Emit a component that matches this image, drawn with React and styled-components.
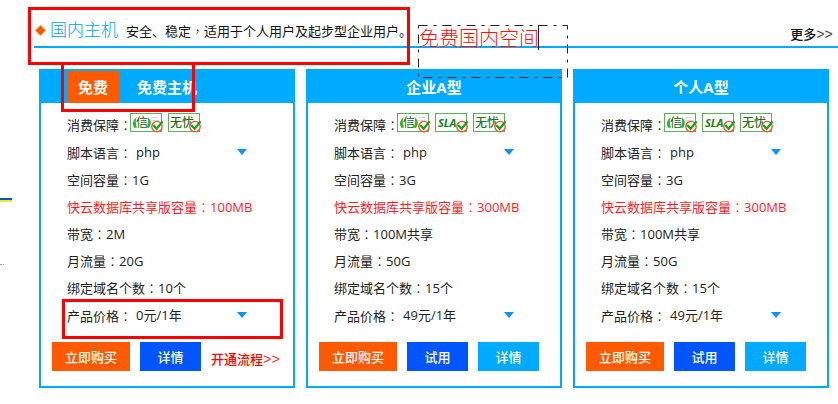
import React, { useState } from 'react';
import styled, { createGlobalStyle } from 'styled-components';

const GlobalStyle = createGlobalStyle`
    * {
        box-sizing: border-box;
    }
    body {
        margin: 0;
        background: #fff;
        color: #222;
        font-family: 'Open Sans', 'Noto Sans CJK SC', sans-serif;
        font-size: 13px;
    }
    button, select, input {
        font-family: inherit;
        font-size: inherit;
    }
`;

const Page = styled.div`
    position: relative;
    display: flex;
    align-items: flex-start;
`;

const Rail = styled.aside`
    flex: 0 0 34px;
    padding-top: 198px;
`;

const RailLine = styled.div`
    width: 12px;
    height: 4px;
    border-top: 2px solid #0055c8;
    border-bottom: 2px solid #f0ea20;
`;

const RailDots = styled.div`
    width: 4px;
    margin-top: 62px;
    border-top: 1px dotted #6aa8e8;
`;

const Section = styled.section`
    flex: 1;
    min-width: 0;
`;

const SectionHeader = styled.header`
    display: flex;
    align-items: center;
    height: 48px;
    padding: 14px 5px 0 1px;
    border-bottom: 2px solid #00aaff;
`;

const Title = styled.h2`
    margin: 0 8px 0 4px;
    font-size: 17px;
    font-weight: 300;
    line-height: 32px;
    color: #00a0f8;
`;

const Summary = styled.p`
    margin: 0;
    color: #111;
    white-space: nowrap;
`;

const MoreLink = styled.a`
    display: flex;
    align-items: center;
    margin-left: auto;
    padding-top: 6px;
    color: #111;
    font-weight: 500;
    text-decoration: none;
    white-space: nowrap;
`;

const Cards = styled.div`
    display: grid;
    grid-template-columns: repeat(3, 1fr);
    gap: 11px;
    padding: 21px 9px 0 5px;
`;

const Card = styled.article`
    border: 2px solid #00aaff;
    padding-bottom: 15px;
`;

const CardHeader = styled.div`
    display: flex;
    justify-content: ${props => props.$tagged ? 'flex-start' : 'center'};
    height: 32px;
    padding-left: ${props => props.$tagged ? '26px' : '0'};
    background: #00aaff;
    color: #fff;
`;

const Tag = styled.span`
    margin-right: 18px;
    padding: 0 11px;
    background: #ff5a00;
    font-size: 15px;
    font-weight: 700;
    line-height: 32px;
`;

const CardName = styled.h3`
    margin: 0;
    font-size: 15px;
    font-weight: 700;
    line-height: 32px;
`;

const Specs = styled.div`
    padding: 7px 0 0 26px;
`;

const Spec = styled.div`
    display: flex;
    align-items: center;
    height: ${props => props.$tall ? '28px' : '27px'};
    color: ${props => props.$accent ? '#ff1e28' : '#222'};
    white-space: nowrap;
`;

/* the TC face centres full-width punctuation */
const Mark = styled.span`
    font-family: 'Noto Sans CJK TC', sans-serif;
    font-weight: 300;
`;

const Badges = styled.span`
    display: flex;
    gap: 5px;
    margin: -2px 0 0 -2px;
`;

const SelectBox = styled.span`
    position: relative;
    display: flex;
    width: 115px;
    svg {
        position: absolute;
        right: 0;
        top: 8px;
        pointer-events: none;
    }
`;

const Select = styled.select`
    appearance: none;
    width: 100%;
    height: 22px;
    padding: 0 0 0 4px;
    border: 0;
    background: transparent;
    color: inherit;
`;

const Actions = styled.div`
    display: flex;
    align-items: center;
    gap: 10px;
    padding: 13px 0 0 11px;
`;

const colors = { buy: '#ff5a00', strong: '#0055ff', light: '#00aaff' };

const Button = styled.button`
    width: ${props => props.$kind === 'buy' ? '78px' : '61px'};
    height: 29px;
    padding: 0;
    border: 0;
    background: ${props => colors[props.$kind]};
    color: #fff;
    font-weight: 500;
    cursor: pointer;
`;

const FlowLink = styled.a`
    display: flex;
    align-items: center;
    padding-top: 4px;
    color: #f00;
    font-weight: 500;
    text-decoration: none;
    white-space: nowrap;
`;

const Arrows = styled.span`
    padding-top: 3px;
    font-family: 'Liberation Mono', monospace;
    font-size: 14px;
    font-weight: 400;
    line-height: 14px;
    opacity: 0.8;
`;

const Frame = styled.div`
    position: absolute;
    left: ${props => props.$left}px;
    top: ${props => props.$top}px;
    width: ${props => props.$width}px;
    height: ${props => props.$height}px;
    border: 3px solid #f00;
    pointer-events: none;
`;

const Note = styled.div`
    position: absolute;
    left: 418px;
    top: 25px;
    display: flex;
    width: 150px;
    height: 53px;
    svg {
        position: absolute;
        inset: 0;
    }
`;

const NoteInput = styled.input`
    width: 121px;
    height: 25px;
    padding: 0 0 0 1px;
    border: 0;
    border-right: 1px solid #222;
    background: transparent;
    color: #ff1010;
    font-family: 'Noto Sans CJK SC', sans-serif;
    font-size: 20px;
    font-weight: 300;
    outline: 0;
`;

const Diamond = () => (
    <svg width="11" height="11" viewBox="0 0 11 11" aria-hidden="true">
        <path d="M5.5 0.4 10.6 5.5 5.5 10.6 0.4 5.5Z" fill="#ff5500" stroke="#e8a020" strokeWidth="0.8" />
    </svg>
);

const Chevron = () => (
    <svg width="10" height="6" viewBox="0 0 10 6" aria-hidden="true">
        <path d="M0 0H10L5 6Z" fill="#0894ff" />
    </svg>
);

const Badge = ({ kind }) => (
    <svg width="33" height="20" viewBox="0 0 33 20" role="img" aria-label={kind}>
        <rect x="0.5" y="0.5" width="31" height="18" fill="#fff" stroke="#5fae5f" />
        {kind === '信云' && (
            <g>
                <path d="M6.6 4Q0.5 9.5 4.5 15L7 14.4Q4.8 9 6.6 4Z" fill="#2bb52b" />
                <path d="M17.6 4Q23.4 9 19 15L16.6 14.5Q19 9 17.6 4Z" fill="#2bb52b" />
                <text x="6" y="14" fontSize="12" fill="#155c15">信</text>
                <text x="20" y="12" fontSize="10" fill="#ccd6cc">云</text>
            </g>
        )}
        {kind === 'SLA' && (
            <text x="3" y="14" fontSize="11" fontWeight="700" fontStyle="italic" fill="#148414">SLA</text>
        )}
        {kind === '无忧' && (
            <text x="2" y="14" fontSize="12" fontWeight="500" fill="#1f701f">无忧</text>
        )}
        <circle cx="27" cy="13.6" r="5.2" fill="#fff" stroke="#f0553c" strokeWidth="1.4" />
        <path d="M23.2 12 26.6 15.8 32.6 8.4" fill="none" stroke="#12a512" strokeWidth="2.2" />
    </svg>
);

const Label = ({ text, htmlFor }) => {
    const Tagname = htmlFor ? 'label' : 'span';
    return <Tagname htmlFor={htmlFor}>{text}<Mark>：</Mark></Tagname>;
};

const SelectSpec = ({ id, label, option }) => (
    <Spec $tall>
        <Label text={label} htmlFor={id} />
        <SelectBox>
            <Select id={id} defaultValue={option}>
                <option>{option}</option>
            </Select>
            <Chevron />
        </SelectBox>
    </Spec>
);

const plans = [
    { id: 'free', name: '免费主机', tag: '免费', badges: ['信云', '无忧'], space: '1G', db: '100MB', band: '2M', flow: '20G', domains: '10个', price: '0元/1年' },
    { id: 'company', name: '企业A型', badges: ['信云', 'SLA', '无忧'], space: '3G', db: '300MB', band: '100M共享', flow: '50G', domains: '15个', price: '49元/1年' },
    { id: 'personal', name: '个人A型', badges: ['信云', 'SLA', '无忧'], space: '3G', db: '300MB', band: '100M共享', flow: '50G', domains: '15个', price: '49元/1年' },
];

const PlanCard = ({ plan }) => (
    <Card>
        <CardHeader $tagged={!!plan.tag}>
            {plan.tag && <Tag>{plan.tag}</Tag>}
            <CardName>{plan.name}</CardName>
        </CardHeader>
        <Specs>
            <Spec $tall>
                <Label text="消费保障" />
                <Badges>
                    {plan.badges.map(kind => <Badge key={kind} kind={kind} />)}
                </Badges>
            </Spec>
            <SelectSpec id={`${plan.id}-lang`} label="脚本语言" option="php" />
            <Spec><Label text="空间容量" />{plan.space}</Spec>
            <Spec $accent><Label text="快云数据库共享版容量" />{plan.db}</Spec>
            <Spec><Label text="带宽" />{plan.band}</Spec>
            <Spec><Label text="月流量" />{plan.flow}</Spec>
            <Spec><Label text="绑定域名个数" />{plan.domains}</Spec>
            <SelectSpec id={`${plan.id}-price`} label="产品价格" option={plan.price} />
        </Specs>
        <Actions>
            <Button type="button" $kind="buy">立即购买</Button>
            {plan.tag ? (
                <>
                    <Button type="button" $kind="strong">详情</Button>
                    <FlowLink href="#flow">开通流程<Arrows>&gt;&gt;</Arrows></FlowLink>
                </>
            ) : (
                <>
                    <Button type="button" $kind="strong">试用</Button>
                    <Button type="button" $kind="light">详情</Button>
                </>
            )}
        </Actions>
    </Card>
);

const App = () => {
    const [note, setNote] = useState('免费国内空间');

    return (
        <Page>
            <GlobalStyle />
            <Rail>
                <RailLine />
                <RailDots />
            </Rail>
            <Section>
                <SectionHeader>
                    <Diamond />
                    <Title>国内主机</Title>
                    <Summary>安全、稳定<Mark>，</Mark>适用于个人用户及起步型企业用户。</Summary>
                    <MoreLink href="#more">更多<Arrows>&gt;&gt;</Arrows></MoreLink>
                </SectionHeader>
                <Cards>
                    {plans.map(plan => <PlanCard key={plan.id} plan={plan} />)}
                </Cards>
            </Section>
            <Frame $left={28} $top={7} $width={382} $height={58} />
            <Frame $left={61} $top={62} $width={134} $height={50} />
            <Frame $left={62} $top={299} $width={221} $height={40} />
            <Note>
                <svg width="150" height="53" aria-hidden="true">
                    <rect x="0.5" y="0.5" width="149" height="52" fill="none" stroke="#222" strokeDasharray="9 6 3 6" />
                </svg>
                <NoteInput aria-label="标注" value={note} onChange={evt => setNote(evt.target.value)} />
            </Note>
        </Page>
    );
};

export default App;
